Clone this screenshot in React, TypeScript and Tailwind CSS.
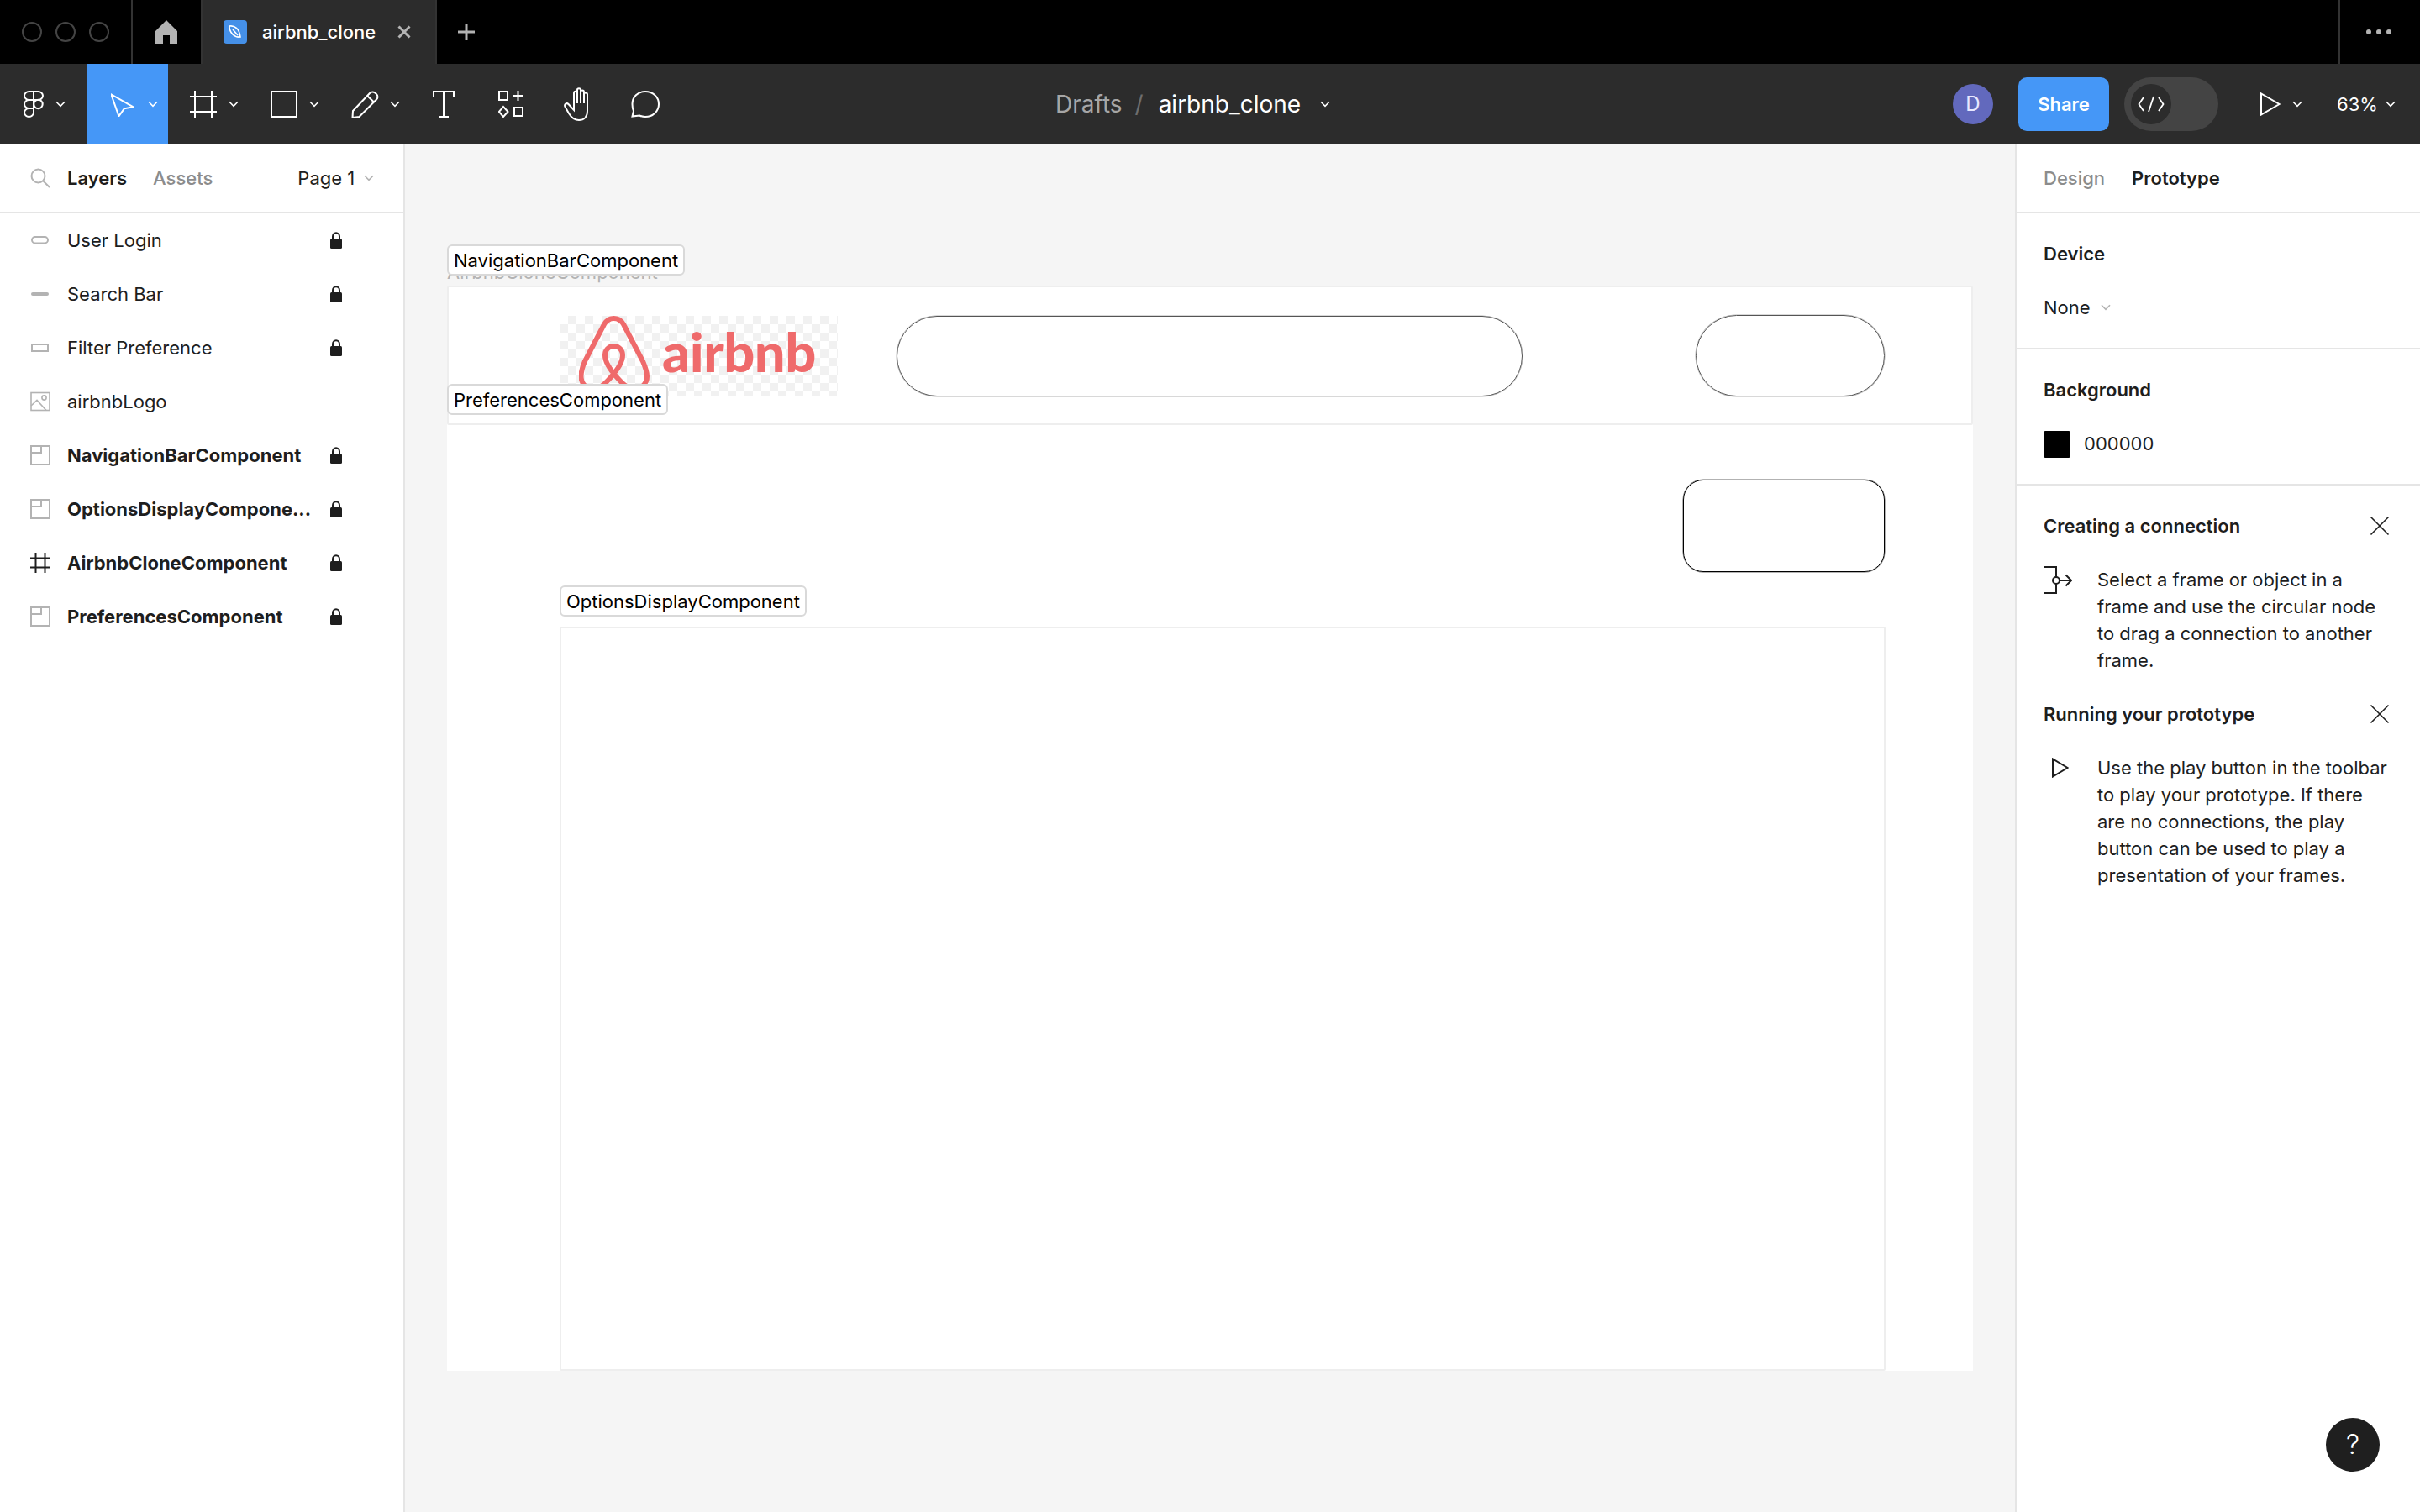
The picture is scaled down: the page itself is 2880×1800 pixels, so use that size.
const Chevron = ({ className = "", stroke = "#fff" }: { className?: string; stroke?: string }) => (
  <svg width="12" height="8" viewBox="0 0 12 8" fill="none" className={className}>
    <path d="M1 1.2L6 6.4L11 1.2" stroke={stroke} strokeWidth="1.6" />
  </svg>
);

const Tool = ({ children, active = false, chevron = false, w = "w-[96px]", chevronClass = "left-[72px]" }: { children: React.ReactNode; active?: boolean; chevron?: boolean; w?: string; chevronClass?: string }) => (
  <div className={`relative h-full flex items-center ${w} ${active ? "bg-[#4597f7]" : ""}`}>
    <div className={chevron ? "w-[84px] flex justify-center" : "w-full flex justify-center"}>{children}</div>
    {chevron && <Chevron className={`absolute top-[44px] ${chevronClass}`} />}
  </div>
);

const LayerIcon = ({ kind }: { kind: string }) => {
  const s = "#b3b3b3";
  return (
    <svg width="24" height="24" viewBox="0 0 24 24" fill="none">
      {kind === "pill" && <rect x="2" y="8" width="19" height="7.5" rx="3.75" stroke={s} strokeWidth="2" />}
      {kind === "line" && <rect x="1" y="10" width="21" height="4" rx="2" fill={s} />}
      {kind === "rect" && <rect x="2" y="8" width="19" height="8" stroke={s} strokeWidth="2" />}
      {kind === "image" && (
        <g stroke={s} strokeWidth="1.6">
          <rect x="1" y="1.5" width="22" height="21" />
          <circle cx="16.5" cy="7.5" r="2.6" />
          <path d="M1 17L8 10.5L19 22.5" />
        </g>
      )}
      {kind === "comp" && (
        <g stroke={s} strokeWidth="2">
          <rect x="1" y="1" width="22" height="22" />
          <path d="M1 9H13V1" />
        </g>
      )}
      {kind === "frame" && <path d="M6.5 0V24M17.5 0V24M0 6.5H24M0 17.5H24" stroke="#1e1e1e" strokeWidth="2" />}
    </svg>
  );
};

const Lock = () => (
  <svg width="14" height="20" viewBox="0 0 14 20" fill="none">
    <path d="M3 9V5.5C3 3 4.8 1.2 7 1.2C9.2 1.2 11 3 11 5.5V9" stroke="#1e1e1e" strokeWidth="2" />
    <rect y="8" width="14" height="12" rx="1.5" fill="#1e1e1e" />
  </svg>
);

const Close = () => (
  <svg width="24" height="24" viewBox="0 0 24 24" fill="none">
    <path d="M1.5 1.5L22.5 22.5M22.5 1.5L1.5 22.5" stroke="#1e1e1e" strokeWidth="1.6" />
  </svg>
);

const Tag = ({ text, className }: { text: string; className: string }) => (
  <div className={`absolute h-[37px] px-[6px] pt-[1px] flex items-center bg-white border-2 border-[#d9d9d9] rounded-[6px] text-[22px] text-black whitespace-nowrap ${className}`}>
    {text}
  </div>
);

const layers = [
  { n: "User Login", k: "pill", l: true, b: false },
  { n: "Search Bar", k: "line", l: true, b: false },
  { n: "Filter Preference", k: "rect", l: true, b: false },
  { n: "airbnbLogo", k: "image", l: false, b: false },
  { n: "NavigationBarComponent", k: "comp", l: true, b: true },
  { n: "OptionsDisplayCompone...", k: "comp", l: true, b: true },
  { n: "AirbnbCloneComponent", k: "frame", l: true, b: true },
  { n: "PreferencesComponent", k: "comp", l: true, b: true },
];

export default function App() {
  return (
    <div className="w-[2880px] h-[1800px] flex flex-col overflow-hidden bg-white text-[#1e1e1e] font-['Inter',sans-serif] text-[22px]">
      {/* Window tab bar */}
      <div className="h-[76px] shrink-0 bg-black flex items-stretch">
        <div className="w-[158px] border-r-2 border-[#333333] flex items-center pl-[26px] gap-[16px]">
          <div className="w-[24px] h-[24px] rounded-full border-2 border-[#444444]" />
          <div className="w-[24px] h-[24px] rounded-full border-2 border-[#444444]" />
          <div className="w-[24px] h-[24px] rounded-full border-2 border-[#444444]" />
        </div>
        <div className="w-[81px] pr-[1px] flex items-center justify-center">
          <svg width="26" height="28" viewBox="0 0 26 28" fill="#b3b3b3">
            <path d="M13 0L26 13V28H17V18H9V28H0V13Z" />
          </svg>
        </div>
        <div className="w-[281px] bg-[#2c2c2c] border-l-2 border-r-2 border-[#333333] flex items-center pl-[25px]">
          <div className="w-[28px] h-[28px] rounded-[4px] bg-[#4590e8] flex items-center justify-center">
            <svg width="20" height="20" viewBox="0 0 20 20" fill="none" stroke="#fff" strokeWidth="1.6">
              <path d="M3 3C9 2 15 6 16 16C9 17 3 11 3 3Z" />
              <path d="M7 7L13 14" />
            </svg>
          </div>
          <span className="ml-[18px] text-white font-medium text-[22px]">airbnb_clone</span>
          <svg width="16" height="16" viewBox="0 0 16 16" className="ml-[26px]" fill="none">
            <path d="M1.5 1.5L14.5 14.5M14.5 1.5L1.5 14.5" stroke="#b3b3b3" strokeWidth="3" />
          </svg>
        </div>
        <div className="w-[70px] flex items-center justify-center">
          <svg width="20" height="20" viewBox="0 0 20 20" fill="none">
            <path d="M10 0V20M0 10H20" stroke="#b3b3b3" strokeWidth="3" />
          </svg>
        </div>
        <div className="ml-auto w-[97px] border-l-2 border-[#333333] flex items-center pl-[31px] gap-[6px]">
          <div className="w-[6px] h-[6px] rounded-full bg-[#b3b3b3]" />
          <div className="w-[6px] h-[6px] rounded-full bg-[#b3b3b3]" />
          <div className="w-[6px] h-[6px] rounded-full bg-[#b3b3b3]" />
        </div>
      </div>

      {/* Toolbar */}
      <div className="h-[96px] shrink-0 bg-[#2c2c2c] flex items-center text-white">
        <div className="flex h-full w-[808px]">
          <Tool chevron w="w-[104px]" chevronClass="left-[66px]">
            <svg width="24" height="32" viewBox="0 0 24 32" fill="none" stroke="#fff" strokeWidth="2" className="-ml-[4px]">
              <path d="M12 1H6.5C3.5 1 1 3.2 1 6C1 8.8 3.5 11 6.5 11H12V1Z" />
              <path d="M12 1H17.5C20.5 1 23 3.2 23 6C23 8.8 20.5 11 17.5 11H12V1Z" />
              <path d="M12 11H6.5C3.5 11 1 13.2 1 16C1 18.8 3.5 21 6.5 21H12V11Z" />
              <circle cx="17.5" cy="16" r="5.2" />
              <path d="M12 21H6.5C3.5 21 1 23.2 1 26C1 28.8 3.5 31 6.5 31C9.5 31 12 28.8 12 26V21Z" />
            </svg>
          </Tool>
          <Tool chevron active>
            <svg width="28" height="30" viewBox="0 0 28 30" fill="none" stroke="#fff" strokeWidth="2">
              <path d="M2 1.5L26 20L15 20.5L7.5 28.5Z" transform="rotate(-8 14 15)" />
            </svg>
          </Tool>
          <Tool chevron>
            <svg width="32" height="32" viewBox="0 0 32 32" fill="none" stroke="#fff" strokeWidth="2">
              <path d="M6 0V32M26 0V32M0 7H32M0 25H32" />
            </svg>
          </Tool>
          <Tool chevron>
            <svg width="32" height="32" viewBox="0 0 32 32" fill="none" stroke="#fff" strokeWidth="2">
              <rect x="1" y="1" width="30" height="30" />
            </svg>
          </Tool>
          <Tool chevron>
            <svg width="33" height="33" viewBox="0 0 33 33" fill="none" stroke="#fff" strokeWidth="2">
              <path d="M2 24L22 3C24 1 27 1 29.5 3.5C32 6 32 8.5 30 10.5L9.5 31L1.5 32Z" />
              <path d="M19 6L27.5 14" />
            </svg>
          </Tool>
          <Tool w="w-[80px]">
            <svg width="26" height="32" viewBox="0 0 26 32" fill="none" stroke="#fff" strokeWidth="2">
              <path d="M1 8V1H25V8M13 1V31M7 31H19" />
            </svg>
          </Tool>
          <Tool w="w-[80px]">
            <svg width="30" height="32" viewBox="0 0 30 32" fill="none" stroke="#fff" strokeWidth="2">
              <rect x="1" y="1" width="10" height="10" />
              <path d="M17 6H30M23.5 0V12" />
              <path d="M6 19L11.5 25L6 31L0.8 25Z" />
              <rect x="19" y="20" width="10" height="10" />
            </svg>
          </Tool>
          <Tool w="w-[80px]">
            <svg width="36" height="40" viewBox="0 0 36 40" fill="none" stroke="#fff" strokeWidth="2" className="ml-[2px]">
              <path d="M12 22V7C12 4 16 4 16 7V3C16 0.5 20 0.5 20 3V5C20 3 24 3 24 5.5V8C24 6 28 6 28 8.5V28C28 35 24 39 18 39C12 39 9 36 6 31L1.5 23C0 20 3.5 18 5.5 20L12 27V22Z" />
              <path d="M16 7V19M20 5V19M24 8V19" />
            </svg>
          </Tool>
          <Tool w="w-[80px]">
            <svg width="34" height="32" viewBox="0 0 34 32" fill="none" stroke="#fff" strokeWidth="2">
              <path d="M1.5 30.5L3 24C2 22 1.5 19.5 1.5 16C1.5 7.5 8 1 17 1C26 1 33 7.5 33 16C33 24.5 26 31 17 31C14 31 12 30.5 10 29.5Z" />
            </svg>
          </Tool>
        </div>
        <div className="ml-[448px] flex items-center text-[28px]">
          <span className="text-[#a6a6a6]">Drafts</span>
          <span className="text-[#6e6e6e] ml-[15px]">/</span>
          <span className="ml-[18px]">airbnb_clone</span>
          <Chevron className="ml-[23px]" />
        </div>
        <div className="ml-auto flex items-center h-full">
          <div className="w-[48px] h-[48px] rounded-full bg-[#6269bd] flex items-center justify-center text-[24px] text-[#e8e8ff]">D</div>
          <div className="ml-[30px] w-[108px] h-[64px] rounded-[10px] bg-[#4597f7] flex items-center justify-center font-semibold text-[22px]">Share</div>
          <div className="ml-[18px] w-[112px] h-[64px] rounded-full bg-[#444444] flex items-center pl-[8px]">
            <div className="w-[48px] h-[48px] rounded-full bg-[#2c2c2c] flex items-center justify-center">
              <svg width="32" height="20" viewBox="0 0 32 20" fill="none" stroke="#fff" strokeWidth="1.8">
                <path d="M7 2L1.5 10L7 18M25 2L30.5 10L25 18M19 1L13 19" />
              </svg>
            </div>
          </div>
          <svg width="24" height="28" viewBox="0 0 24 28" fill="none" stroke="#fff" strokeWidth="2" className="ml-[50px]">
            <path d="M1 1.5V26.5L22.5 14Z" />
          </svg>
          <Chevron className="ml-[14px]" />
          <span className="ml-[41px] w-[45px] whitespace-nowrap text-[22px]">63%</span>
          <Chevron className="ml-[13px] mr-[29px]" />
        </div>
      </div>

      <div className="flex-1 flex min-h-0">
        {/* Layers panel */}
        <aside className="w-[482px] shrink-0 border-r-2 border-[#e5e5e5] flex flex-col">
          <div className="h-[82px] border-b-2 border-[#e5e5e5] flex items-center pl-[36px]">
            <svg width="24" height="24" viewBox="0 0 24 24" fill="none" stroke="#b3b3b3" strokeWidth="2">
              <circle cx="9.5" cy="9.5" r="8" />
              <path d="M15 15L23 23" />
            </svg>
            <span className="ml-[20px] font-semibold">Layers</span>
            <span className="ml-[31px] font-medium text-[#8c8c8c]">Assets</span>
            <span className="ml-[101px]">Page 1</span>
            <Chevron stroke="#b3b3b3" className="ml-[11px]" />
          </div>
          {layers.map((r) => (
            <div key={r.n} className="h-[64px] flex items-center pl-[36px]">
              <LayerIcon kind={r.k} />
              <span className={`ml-[20px] w-[313px] ${r.b ? "font-bold" : ""}`}>{r.n}</span>
              {r.l && <Lock />}
            </div>
          ))}
        </aside>

        {/* Canvas */}
        <main className="relative flex-1 bg-[#f5f5f5]">
          <div className="absolute left-[50px] top-[168px] w-[1816px] h-[1292px] bg-white" />
          <div className="absolute left-[50px] top-[136px] text-[22px] text-[#b3b3b3] whitespace-nowrap">AirbnbCloneComponent</div>
          <div className="absolute left-[50px] top-[168px] w-[1816px] h-[166px] border-2 border-[#eeeeee] rounded-[2px]" />
          <div className="absolute left-[184px] top-[204px] w-[331px] h-[96px] bg-[repeating-conic-gradient(#f1f1f1_0_25%,#ffffff_0_50%)] bg-[length:20px_20px] flex items-center">
            <svg width="84" height="91" viewBox="0 0 84 91" fill="none" stroke="#ef6a6b" strokeWidth="6" className="ml-[23px] self-start">
              <path d="M41.5 36C35 36 31 41 31 47C31 55 37 64 45 73C52 81 58 87 66 87C75 87 81 80 81 72C81 66 79 61 76 54L53 10C50 5 47 3 41.5 3C36 3 33 5 30 10L7 54C4 61 2.5 66 2.5 72C2.5 80 8 87 17 87C25 87 31 81 38 73C46 64 52 55 52 47C52 41 48 36 41.5 36Z" />
            </svg>
            <span className="ml-[15px] -mt-[12px] font-['Lato',sans-serif] font-black text-[65px] leading-none tracking-[-0.5px] text-[#ef6a6b]">airbnb</span>
          </div>
          <Tag text="NavigationBarComponent" className="left-[50px] top-[119px]" />
          <Tag text="PreferencesComponent" className="left-[50px] top-[285px]" />
          <div className="absolute left-[585px] top-[204px] w-[745px] h-[96px] rounded-full border border-[#555555] shadow-[0_0_0_0.5px_rgba(102,102,102,0.5)]" />
          <div className="absolute left-[1536px] top-[203px] w-[225px] h-[97px] rounded-full border border-[#555555] shadow-[0_0_0_0.5px_rgba(102,102,102,0.5)]" />
          <div className="absolute left-[1521px] top-[399px] w-[240px] h-[110px] rounded-[24px] border border-black shadow-[0_0_0_0.5px_rgba(0,0,0,0.6)]" />
          <Tag text="OptionsDisplayComponent" className="left-[184px] top-[525px]" />
          <div className="absolute left-[184px] top-[574px] w-[1578px] h-[886px] border-2 border-[#eeeeee] rounded-[2px]" />
        </main>

        {/* Prototype panel */}
        <aside className="relative w-[480px] shrink-0 flex flex-col border-l-2 border-[#e5e5e5] -ml-[2px] box-content">
          <div className="h-[82px] border-b-2 border-[#e5e5e5] flex items-center pl-[32px]">
            <span className="font-medium text-[#8c8c8c]">Design</span>
            <span className="ml-[32px] font-semibold">Prototype</span>
          </div>
          <div className="h-[162px] border-b-2 border-[#e5e5e5] pl-[32px] pt-[32px]">
            <div className="font-semibold leading-[32px]">Device</div>
            <div className="mt-[32px] flex items-center leading-[32px]">
              None
              <Chevron stroke="#b3b3b3" className="ml-[12px]" />
            </div>
          </div>
          <div className="h-[162px] border-b-2 border-[#e5e5e5] pl-[32px] pt-[32px]">
            <div className="font-semibold leading-[32px]">Background</div>
            <div className="mt-[32px] flex items-center">
              <div className="w-[32px] h-[32px] bg-black rounded-[2px]" />
              <span className="ml-[16px]">000000</span>
            </div>
          </div>
          <div className="px-[32px] pt-[32px]">
            <div className="flex items-center justify-between h-[32px] pr-[4px]">
              <span className="font-semibold">Creating a connection</span>
              <Close />
            </div>
            <div className="flex mt-[32px]">
              <div className="w-[64px] shrink-0">
                <svg width="34" height="34" viewBox="0 0 34 34" fill="none" stroke="#1e1e1e" strokeWidth="2">
                  <path d="M1 1H15V32H1" />
                  <circle cx="15" cy="17" r="4" fill="#fff" />
                  <path d="M19 17H33M26.5 10.5L33 17L26.5 23.5" />
                </svg>
              </div>
              <p className="leading-[32px] w-[350px]">Select a frame or object in a frame and use the circular node to drag a connection to another frame.</p>
            </div>
            <div className="flex items-center justify-between h-[32px] pr-[4px] mt-[32px]">
              <span className="font-semibold">Running your prototype</span>
              <Close />
            </div>
            <div className="flex mt-[32px]">
              <div className="w-[64px] shrink-0 pl-[10px] pt-[4px]">
                <svg width="20" height="24" viewBox="0 0 20 24" fill="none" stroke="#1e1e1e" strokeWidth="2">
                  <path d="M1 1.5V22.5L18.5 12Z" />
                </svg>
              </div>
              <p className="leading-[32px] w-[360px]">Use the play button in the toolbar to play your prototype. If there are no connections, the play button can be used to play a presentation of your frames.</p>
            </div>
          </div>
          <div className="absolute left-[368px] top-[1516px] w-[64px] h-[64px] rounded-full bg-[#1f1f1f] flex items-center justify-center text-white text-[32px] font-light">?</div>
        </aside>
      </div>
    </div>
  );
}
